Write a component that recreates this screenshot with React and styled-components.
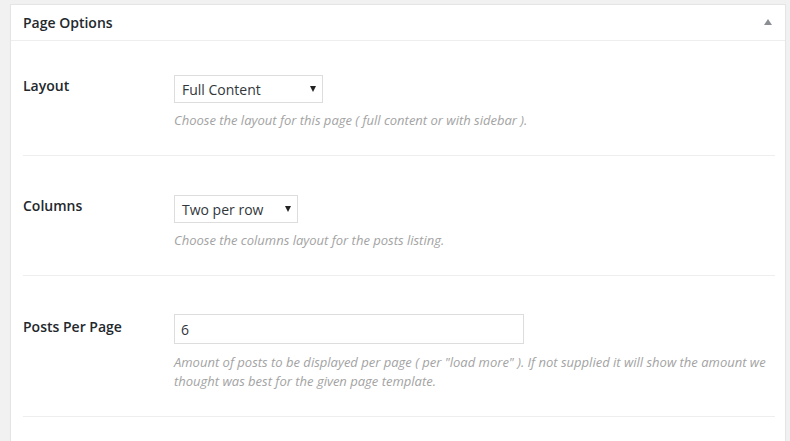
import React from 'react';
import styled, { createGlobalStyle } from 'styled-components';

const GlobalStyle = createGlobalStyle`
  html, body {
    margin: 0;
    padding: 0;
    background: #f1f1f1;
    font-family: "Open Sans", "Liberation Sans", sans-serif;
    color: #444;
  }
`;

const Page = styled.div`
  padding: 4px 4px 0 10px;
`;

const Postbox = styled.div`
  background: #fff;
  border: 1px solid #e5e5e5;
  box-shadow: 0 1px 1px rgba(0, 0, 0, 0.04);
`;

const Header = styled.div`
  display: flex;
  align-items: center;
  justify-content: space-between;
  height: 35px;
  padding: 0 13px 0 12px;
  border-bottom: 1px solid #eee;
`;

const Title = styled.h2`
  margin: 0;
  font-size: 14px;
  font-weight: 600;
  line-height: 1.4;
  color: #23282d;
`;

const Toggle = styled.span`
  width: 0;
  height: 0;
  border-left: 4px solid transparent;
  border-right: 4px solid transparent;
  border-bottom: 6px solid #8b8f93;
  margin-top: -2px;
`;

const Inside = styled.div`
  padding: 0 10px 0 12px;
`;

const Section = styled.div`
  display: grid;
  grid-template-columns: 151px 1fr;
  padding: ${(p) => p.$top}px 0 25px;
  border-bottom: 1px solid #eee;
`;

const Label = styled.div`
  padding-top: ${(p) => p.$offset}px;
  font-size: 14px;
  font-weight: 600;
  line-height: 20px;
  color: #23282d;
`;

const Field = styled.div`
  display: flex;
  flex-direction: column;
  align-items: flex-start;
`;

const SelectBox = styled.div`
  display: flex;
  align-items: center;
  justify-content: space-between;
  box-sizing: border-box;
  width: ${(p) => p.$width}px;
  height: 28px;
  padding: 0 6px 0 7px;
  border: 1px solid #ddd;
  background: #fff;
  font-size: 14px;
  color: #32373c;
`;

const Caret = styled.span`
  width: 0;
  height: 0;
  border-left: 3px solid transparent;
  border-right: 3px solid transparent;
  border-top: 6px solid #222;
`;

const TextInput = styled.input`
  box-sizing: border-box;
  width: 350px;
  height: 30px;
  padding: 0 6px;
  border: 1px solid #ddd;
  background: #fff;
  font-family: inherit;
  font-size: 14px;
  color: #32373c;
  outline: none;
`;

const Description = styled.p`
  margin: ${(p) => p.$gap || 8}px 0 0;
  font-size: 13px;
  font-style: italic;
  line-height: 19px;
  color: #a3a3a3;
`;

function Select({ value, width }) {
  return (
    <SelectBox $width={width}>
      <span>{value}</span>
      <Caret />
    </SelectBox>
  );
}

export default function App() {
  return (
    <>
      <GlobalStyle />
      <Page>
        <Postbox>
          <Header>
            <Title>Page Options</Title>
            <Toggle />
          </Header>
          <Inside>
            <Section $top={34}>
              <Label $offset={1}>Layout</Label>
              <Field>
                <Select value="Full Content" width={149} />
                <Description>Choose the layout for this page ( full content or with sidebar ).</Description>
              </Field>
            </Section>
            <Section $top={39}>
              <Label $offset={1}>Columns</Label>
              <Field>
                <Select value="Two per row" width={124} />
                <Description>Choose the columns layout for the posts listing.</Description>
              </Field>
            </Section>
            <Section $top={38}>
              <Label $offset={3}>Posts Per Page</Label>
              <Field>
                <TextInput defaultValue="6" />
                <Description $gap={9}>
                  Amount of posts to be displayed per page ( per "load more" ). If not supplied it will show the amount we thought was best for the given page template.
                </Description>
              </Field>
            </Section>
            <Section $top={34} />
          </Inside>
        </Postbox>
      </Page>
    </>
  );
}
